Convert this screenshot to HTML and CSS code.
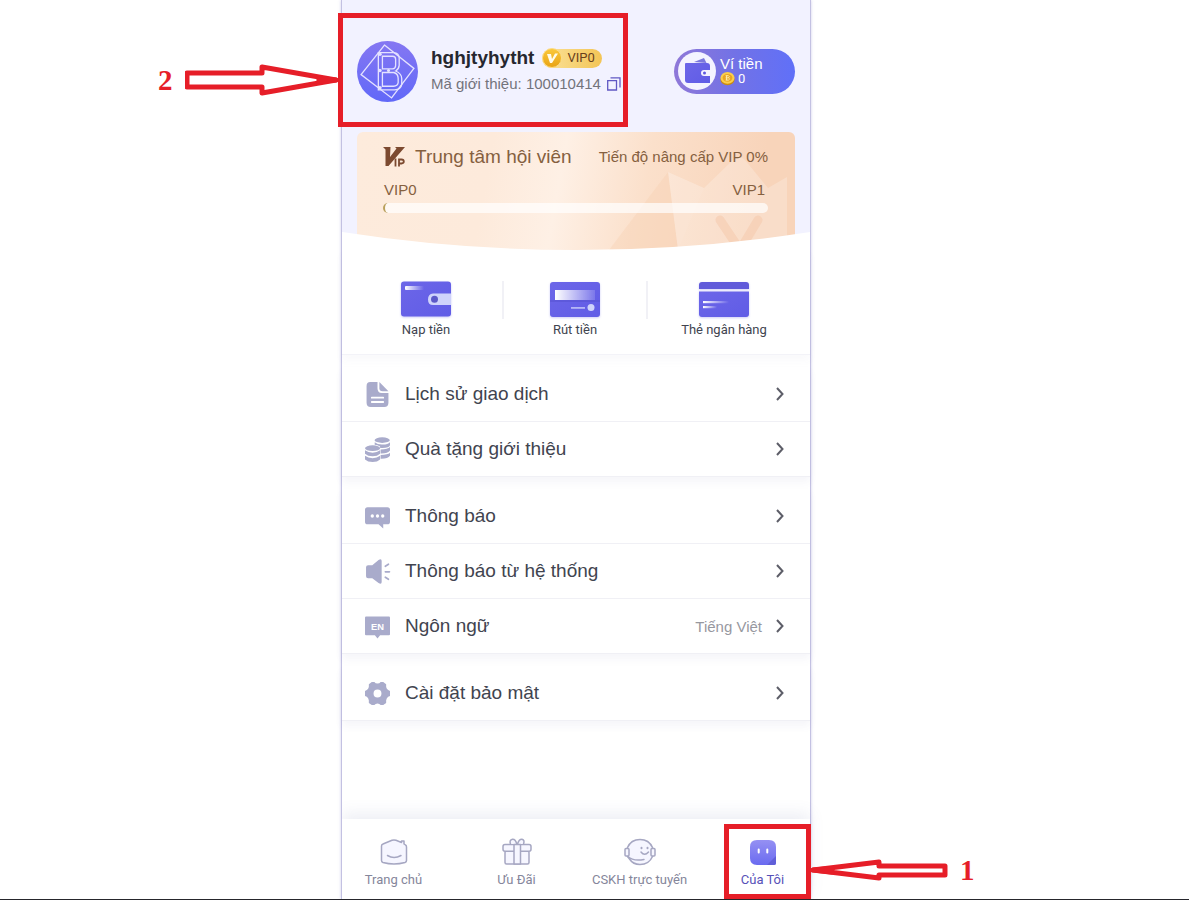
FILE: index.html
```html
<!DOCTYPE html>
<html lang="vi">

<head>
    <meta charset="UTF-8">
    <meta name="viewport" content="width=device-width, initial-scale=1.0">
    <title>Của Tôi</title>
    <link rel="stylesheet" href="styles.css">
</head>

<body>
    <!-- Shared gradients -->
    <svg class="defs" width="0" height="0" aria-hidden="true">
        <defs>
            <linearGradient id="violet" x1="0" y1="0" x2="0" y2="1">
                <stop offset="0" stop-color="#8577f2" />
                <stop offset="1" stop-color="#6168f8" />
            </linearGradient>
            <linearGradient id="face" x1="0" y1="0" x2="0" y2="1">
                <stop offset="0" stop-color="#9590f3" />
                <stop offset="1" stop-color="#6a6bf0" />
            </linearGradient>
            <linearGradient id="card" x1="0" y1="0" x2="1" y2="1">
                <stop offset="0" stop-color="#6c66e8" />
                <stop offset="1" stop-color="#605ce6" />
            </linearGradient>
            <linearGradient id="shine" x1="0" y1="0" x2="1" y2="0">
                <stop offset="0" stop-color="#fff" />
                <stop offset="1" stop-color="#fff" stop-opacity="0.15" />
            </linearGradient>
            <linearGradient id="fade" x1="0" y1="0" x2="1" y2="0">
                <stop offset="0" stop-color="#fff" />
                <stop offset="1" stop-color="#fff" stop-opacity="0" />
            </linearGradient>
            <linearGradient id="gold" x1="0" y1="0" x2="0" y2="1">
                <stop offset="0" stop-color="#fbc93c" />
                <stop offset="1" stop-color="#e8a213" />
            </linearGradient>
        </defs>
    </svg>

    <div class="page">
        <div class="phone">
            <header class="header">
                <div class="profile">
                    <svg class="avatar" viewBox="0 0 60 60" aria-hidden="true">
                        <circle cx="30" cy="30" r="30" fill="url(#violet)" />
                        <g fill="none" stroke="#e4e2ff" stroke-width="1.300">
                            <path d="M27 4 56 27 34 56 4 33Z" />
                            <path d="M21 11.500H36Q41.500 12 41.500 17V24Q41 28 38 29.500Q44 32 44 37V43Q43 48 37 48H21Z" />
                            <path d="M25 15H35Q38 15 38 18V24Q38 27 35 27.500H25Z" />
                            <path d="M25 31H36Q40.500 32 40.500 37V41Q40 44.500 36 44.500H25Z" />
                        </g>
                        <g fill="#e4e2ff">
                            <circle cx="22.500" cy="13" r="1.800" />
                            <circle cx="22.500" cy="29" r="1.800" />
                            <circle cx="22.500" cy="46" r="1.800" />
                            <circle cx="31" cy="29" r="1.500" />
                        </g>
                    </svg>
                    <div class="profile-info">
                        <div class="name-row">
                            <h1 class="name">hghjtyhytht</h1>
                            <span class="vip-badge">
                                <svg viewBox="0 0 20 20" aria-hidden="true">
                                    <circle cx="10" cy="10" r="9.500" fill="url(#gold)" stroke="#fbdc8a" />
                                    <path d="M5 6H9L10 11 13 5.500H16L10 15H8Z" fill="#fffbe8" />
                                </svg>
                                <span>VIP0</span>
                            </span>
                        </div>
                        <div class="code-row">
                            <span>Mã giới thiệu: 100010414</span>
                            <button class="copy" type="button" aria-label="Sao chép">
                                <svg viewBox="0 0 14 14" aria-hidden="true">
                                    <path d="M.7 3.700H9.500V13H.7ZM3.500.9H13V10.500" fill="none" stroke="#6058c4" stroke-width="1.300" />
                                </svg>
                            </button>
                        </div>
                    </div>
                    <a class="wallet" href="#">
                        <svg class="wallet-icon" viewBox="0 0 38 38" aria-hidden="true">
                            <circle cx="19" cy="19" r="19" fill="#f4f3ff" />
                            <path d="M16 10 26 6 28.500 11Z" fill="#7b78dc" />
                            <path d="M8 11H29Q32 11 32 14V31H10Q7 31 7 28V12Q7 11 8 11Z" fill="url(#card)" />
                            <path d="M32 18H26Q23 18 23 21T26 24H32Z" fill="#f4f3ff" />
                            <circle cx="26.500" cy="21" r="1.500" fill="#5d58e0" />
                        </svg>
                        <span class="wallet-text">
                            <span>Ví tiền</span>
                            <span class="coins">
                                <svg viewBox="0 0 16 15" aria-hidden="true">
                                    <ellipse cx="8" cy="8.500" rx="7.500" ry="6.300" fill="#c98a12" />
                                    <ellipse cx="8" cy="6.800" rx="7.500" ry="6.300" fill="#fbcf4b" />
                                    <ellipse cx="8" cy="6.800" rx="5.200" ry="4.200" fill="#e9a723" />
                                    <path d="M6 4.500H9Q11 5.500 9 6.800Q11.500 8 9 9.200H6M6 6.800H9M7 4.500V9.200" fill="none" stroke="#fff0b0" />
                                </svg>
                                0
                            </span>
                        </span>
                    </a>
                </div>

                <section class="vip-card">
                    <svg class="crown" viewBox="0 0 190 104" aria-hidden="true">
                        <path d="M4 104 63 26 73 104Z" fill="#f6ceb0" opacity=".35" />
                        <path d="M63 26 99 42 128 14Q134 8 140 14L163 42 182 31V104H73Z" fill="#fff" opacity=".22" />
                        <path d="M63 26 99 42 73 104Z" fill="#fff" opacity=".06" />
                        <path d="M115 74 135 104 153 74" fill="none" stroke="#f6cdb0" stroke-width="9" stroke-linecap="round" opacity=".65" />
                    </svg>
                    <div class="vip-top">
                        <h2 class="vip-title">
                            <svg viewBox="0 0 22 22" aria-hidden="true">
                                <path d="M0 1H7.500L7 11 13.500 2.500 12 1H22L5.500 20H2.500V3.500Z" fill="#7c4a30" />
                                <path d="M12.500 12.500V20.500M16 20.500V13.500H18.500Q20.800 13.700 20.800 15.500T18.500 17.500H16" fill="none" stroke="#7c4a30" stroke-width="1.800" />
                            </svg>
                            Trung tâm hội viên
                        </h2>
                        <span>Tiến độ nâng cấp VIP 0%</span>
                    </div>
                    <div class="vip-levels">
                        <span>VIP0</span>
                        <span>VIP1</span>
                    </div>
                    <progress class="vip-progress" value="0" max="100" aria-label="Tiến độ nâng cấp VIP">0%</progress>
                </section>

                <svg class="curve" viewBox="0 0 468 18" preserveAspectRatio="none" aria-hidden="true">
                    <path d="M0 0Q234 36 468 0V18H0Z" fill="#fff" />
                </svg>
            </header>

            <main>
                <div class="quick">
                    <a class="quick-item" href="#">
                        <svg viewBox="0 0 50 36" aria-hidden="true">
                            <rect width="50" height="35" y=".5" rx="3" fill="url(#card)" />
                            <rect x="4" y="5" width="19" height="4" rx="1" fill="url(#fade)" />
                            <path d="M50 12.500H32Q27 13 27 18.500T32 24H50Z" fill="#cfd3fb" />
                            <circle cx="33.500" cy="18.300" r="3.500" fill="#5c58c8" />
                        </svg>
                        Nạp tiền
                    </a>
                    <span class="divider"></span>
                    <a class="quick-item" href="#">
                        <svg viewBox="0 0 50 36" aria-hidden="true">
                            <rect width="50" height="35" y="1" rx="3" fill="url(#card)" />
                            <rect y="19.500" width="50" height="1" fill="#5550cf" />
                            <rect x="5" y="9" width="40" height="10" fill="url(#shine)" />
                            <rect x="21" y="26" width="14" height="1.800" fill="#c9ccfa" opacity=".8" />
                            <circle cx="41" cy="26.500" r="3.500" fill="#cfd3fb" />
                        </svg>
                        Rút tiền
                    </a>
                    <span class="divider"></span>
                    <a class="quick-item" href="#">
                        <svg viewBox="0 0 50 36" aria-hidden="true">
                            <path d="M3 1H47Q50 1 50 4V8H0V4Q0 1 3 1Z" fill="#615bda" />
                            <path d="M0 10.500H50V33Q50 36 47 36H3Q0 36 0 33Z" fill="url(#card)" />
                            <rect x="4" y="20" width="26" height="2.200" fill="url(#fade)" />
                            <rect x="4" y="25" width="14" height="2.200" fill="url(#fade)" />
                        </svg>
                        Thẻ ngân hàng
                    </a>
                </div>

                <nav class="menu">
                    <a class="menu-item" href="#">
                        <svg class="menu-icon" viewBox="0 0 24 24" aria-hidden="true">
                            <path d="M5 0H12V6Q12 10.500 16 10.500H22.500V20Q22.500 24 18.500 24H5.500Q1.500 24 1.500 20V4Q1.500 0 5 0Z" />
                            <path d="M13.800 0 22.500 8.800H17Q13.800 8.800 13.800 6Z" />
                            <path d="M6.500 15H17.500M6.500 19.200H17.500" stroke="#fff" stroke-width="1.700" stroke-linecap="round" />
                        </svg>
                        <span class="menu-label">Lịch sử giao dịch</span>
                        <svg class="chevron" viewBox="0 0 8 14" aria-hidden="true"><path d="M1 1 6.500 7 1 13" /></svg>
                    </a>
                    <a class="menu-item" href="#">
                        <svg class="menu-icon" viewBox="0 0 24 24" aria-hidden="true">
                            <ellipse cx="16.500" cy="3" rx="7.300" ry="2.700" />
                            <path d="M9.300 5Q12 7.500 17 7.300T24 5V8Q23 11 14.500 10.500V9Q12 7.700 9.300 7.500Z" />
                            <path d="M15 12Q22 12 24 9.700V13Q22 16 15 15.800ZM15 17.200Q22 17 24 15V18Q22 21 15 20.800Z" />
                            <ellipse cx="7.300" cy="10.700" rx="7.300" ry="2.700" />
                            <path d="M0 12.700Q3 15 7.300 15T14.500 12.700V16Q12 18.500 7.300 18.500T0 16ZM0 18Q3 20.300 7.300 20.300T14.500 18V21.500Q12 24 7.300 24T0 21.500Z" />
                        </svg>
                        <span class="menu-label">Quà tặng giới thiệu</span>
                        <svg class="chevron" viewBox="0 0 8 14" aria-hidden="true"><path d="M1 1 6.500 7 1 13" /></svg>
                    </a>
                </nav>

                <nav class="menu">
                    <a class="menu-item" href="#">
                        <svg class="menu-icon" viewBox="0 0 24 24" aria-hidden="true">
                            <path d="M2.500 3H21.500Q24 3 24 5.500V17Q24 19.500 21.500 19.500H17.500V23.500L13 19.500H2.500Q0 19.500 0 17V5.500Q0 3 2.500 3Z" />
                            <g fill="#fff">
                                <circle cx="7" cy="11.500" r="1.600" />
                                <circle cx="12" cy="11.500" r="1.600" />
                                <circle cx="17" cy="11.500" r="1.600" />
                            </g>
                        </svg>
                        <span class="menu-label">Thông báo</span>
                        <svg class="chevron" viewBox="0 0 8 14" aria-hidden="true"><path d="M1 1 6.500 7 1 13" /></svg>
                    </a>
                    <a class="menu-item" href="#">
                        <svg class="menu-icon" viewBox="0 0 24 24" aria-hidden="true">
                            <path d="M3 6H7L13 1Q16-.8 16 2V22Q16 24.800 13 23L7 18.500H3Q1 18.500 1 16.500V8Q1 6 3 6Z" />
                            <path d="M19.500 7 22.500 5M19.500 12.300H23.500M19.500 17.500 22.500 19.500" stroke="#a9abcb" stroke-width="1.600" stroke-linecap="round" />
                        </svg>
                        <span class="menu-label">Thông báo từ hệ thống</span>
                        <svg class="chevron" viewBox="0 0 8 14" aria-hidden="true"><path d="M1 1 6.500 7 1 13" /></svg>
                    </a>
                    <a class="menu-item" href="#">
                        <svg class="menu-icon" viewBox="0 0 24 24" aria-hidden="true">
                            <path d="M1 2.500H23Q24 2.500 24 3.500V19.500Q24 20.500 23 20.500H14.500L12 23.500 9.500 20.500H1Q0 20.500 0 19.500V3.500Q0 2.500 1 2.500Z" />
                            <text x="12" y="15" text-anchor="middle" class="lang-text">EN</text>
                        </svg>
                        <span class="menu-label">Ngôn ngữ</span>
                        <span class="menu-value">Tiếng Việt</span>
                        <svg class="chevron" viewBox="0 0 8 14" aria-hidden="true"><path d="M1 1 6.500 7 1 13" /></svg>
                    </a>
                </nav>

                <nav class="menu">
                    <a class="menu-item" href="#">
                        <svg class="menu-icon" viewBox="0 0 24 24" aria-hidden="true">
                            <path fill-rule="evenodd" d="M6.500 1H9Q10 2.500 12 2.500T15 1H17.500L20.300 3Q20 6 21 7.500T24 9.500V14.500Q22 15 21 16.500T20.300 21L17.500 23H15Q14 21.500 12 21.500T9 23H6.500L3.700 21Q4 18 3 16.500T0 14.500V9.500Q2 9 3 7.500T3.700 3ZM12 8.200A3.800 3.800 0 1 0 12 15.800 3.800 3.800 0 1 0 12 8.200Z" />
                        </svg>
                        <span class="menu-label">Cài đặt bảo mật</span>
                        <svg class="chevron" viewBox="0 0 8 14" aria-hidden="true"><path d="M1 1 6.500 7 1 13" /></svg>
                    </a>
                </nav>
            </main>

            <nav class="tabs">
                <a class="tab" href="#">
                    <svg viewBox="0 0 32 28" aria-hidden="true">
                        <path d="M3.500 8Q3.500 6.500 5 6L14 2.300Q16 1.500 18 2.300L23.500 4.500V3H26V6L27.500 7Q28.500 7.500 28.500 9V22.500Q28.500 24 27 24.500Q16 27.500 5 24.500Q3.500 24 3.500 22.500Z" />
                        <path d="M9.500 17.500Q16 21.500 23 17.500" />
                    </svg>
                    Trang chủ
                </a>
                <a class="tab" href="#">
                    <svg viewBox="0 0 32 28" aria-hidden="true">
                        <rect x="4" y="13" width="24" height="13" rx="1.500" />
                        <rect x="2" y="6.500" width="28" height="6.700" rx="2" />
                        <path d="M13 6.500H19.500V26H13ZM15.800 6Q14.500 1 11.500 1.200Q8 2 9.500 6M16.500 6Q18 1 21 1.200Q24 2 22.500 6" />
                    </svg>
                    Ưu Đãi
                </a>
                <a class="tab" href="#">
                    <svg viewBox="0 0 32 28" aria-hidden="true">
                        <path d="M3.500 9.500Q7 1.500 16 1.500T28.500 9.500V18.500Q25 26.500 16 26.500Q9 26.500 5.500 21L3.500 18.500Z" />
                        <rect x="1" y="10.500" width="4" height="7.500" rx="1" />
                        <rect x="27" y="10.500" width="4" height="7.500" rx="1" />
                        <path d="M4 18.500Q9 23.500 20 21.500" />
                        <path d="M17 14Q20.500 18.500 24.500 14" fill="none" />
                        <path d="M17.500 9.800V10.200M23.500 9.800V10.200" stroke-width="2" />
                    </svg>
                    CSKH trực tuyến
                </a>
                <a class="tab tab-active" href="#">
                    <svg viewBox="0 0 32 28" aria-hidden="true">
                        <path d="M10 2H22Q29 2 29 9V25Q29 27 27 27H10Q3 27 3 20V9Q3 2 10 2Z" fill="url(#face)" stroke="none" />
                        <path d="M29 18V25Q29 27 27 27H20Z" fill="#605fd8" stroke="none" />
                        <path d="M11.700 11.500V14.500M20.300 11.500V14.500" stroke="#fff" stroke-width="2" />
                    </svg>
                    Của Tôi
                </a>
                <div class="mark mark-tab"></div>
                <div class="note note-tab">
                    <svg width="138" height="34" viewBox="0 0 138 34" aria-hidden="true">
                        <path d="M3 17 69 9V13H135V22H69V25Z" />
                        <path d="M3 17 22 15.500V19Z" />
                    </svg>
                    <span>1</span>
                </div>
            </nav>

            <div class="mark mark-profile"></div>
            <div class="note note-profile">
                <span>2</span>
                <svg width="154" height="34" viewBox="0 0 154 34" aria-hidden="true">
                    <path d="M2 10H77V4L151 17 77 30V24H2Z" />
                    <path d="M151 17 134 15.500V18.500Z" />
                </svg>
            </div>
        </div>
    </div>
</body>

</html>
```
FILE: styles.css
```css
:root {
    --primary-color: #6070f8;
    --header-color: #f2f2ff;
    --icon-color: #a9abcb;
    --text-color: #41444f;
    --brown: #85603f;
    --mark-color: #e61e28;
}

* {
    box-sizing: border-box;
}

body {
    margin: 0;
    font-family: "Liberation Sans", Arial, sans-serif;
    font-size: 15px;
    color: var(--text-color);
    background-color: #fff;
}

a {
    color: inherit;
    text-decoration: none;
}

svg {
    display: block;
    flex-shrink: 0;
}

h1,
h2 {
    margin: 0;
    font-size: 19px;
}

.defs {
    position: absolute;
}

.page {
    display: grid;
    grid-template-columns: 341fr minmax(auto, 470px) 378fr;
    min-height: 100vh;
    overflow: hidden;
    border-bottom: 1px solid #26262c;
}

.phone {
    grid-column: 2;
    position: relative;
    display: flex;
    flex-direction: column;
    border: 1px solid #c3c1e2;
    border-width: 0 1px;
    box-shadow: 0 0 3px rgba(120, 118, 200, 0.35);
}

/* Header */
.header {
    padding: 40px 15px 0;
    background-color: var(--header-color);
}

.profile {
    display: flex;
    align-items: center;
    height: 62px;
}

.avatar {
    width: 61px;
    height: 61px;
}

.profile-info {
    flex: 1;
    margin-left: 13px;
}

.name-row,
.code-row {
    display: flex;
    align-items: center;
    gap: 8px;
    line-height: 26px;
}

.name {
    color: #26272f;
}

.vip-badge {
    display: flex;
    align-items: center;
    gap: 5px;
    height: 19px;
    padding-right: 7px;
    border-radius: 10px;
    background: linear-gradient(90deg, #fbe39c, #f3c556);
    color: #68401c;
    font-family: Roboto, sans-serif;
    font-size: 13px;
}

.vip-badge svg {
    width: 20px;
    height: 20px;
}

.code-row {
    gap: 6px;
    color: #73747c;
}

.copy {
    padding: 0;
    border: 0;
    background: none;
}

.copy svg {
    width: 14px;
    height: 14px;
}

.wallet {
    display: flex;
    align-items: center;
    gap: 4px;
    width: 121px;
    height: 45px;
    padding-left: 4px;
    border-radius: 23px;
    background: linear-gradient(90deg, #8f78d8, #7272e6 50%, var(--primary-color));
    color: #fff;
}

.wallet-icon {
    width: 38px;
    height: 38px;
}

.wallet-text {
    line-height: 15px;
}

.coins {
    display: flex;
    align-items: center;
    gap: 3px;
    font-family: Roboto, sans-serif;
    font-size: 13px;
}

.coins svg {
    width: 15px;
    height: 15px;
}

/* VIP card */
.vip-card {
    position: relative;
    height: 118px;
    margin-top: 30px;
    padding: 12px 27px 0 26px;
    border-radius: 6px 6px 0 0;
    overflow: hidden;
    background: linear-gradient(100deg, #fdebdc 0%, #fdeadb 30%, #fef0e5 46%, #fbe0cb 65%, #f8d4ba 90%);
    color: var(--brown);
}

.crown {
    position: absolute;
    right: 0;
    bottom: 0;
    width: 190px;
    height: 104px;
}

.vip-top,
.vip-levels {
    position: relative;
    display: flex;
    justify-content: space-between;
    align-items: center;
    line-height: 26px;
}

.vip-title {
    display: flex;
    align-items: center;
    gap: 10px;
    font-weight: normal;
}

.vip-title svg {
    width: 22px;
    height: 22px;
}

.vip-levels {
    padding: 7px 3px 0 1px;
}

.vip-progress {
    position: relative;
    display: block;
    width: 100%;
    height: 10px;
    appearance: none;
    border: 0;
    border-left: 2px solid #b9a05c;
    border-radius: 5px;
    overflow: hidden;
    background: rgba(255, 255, 255, 0.7);
}

.vip-progress::-webkit-progress-bar {
    background: transparent;
}

.curve {
    position: relative;
    width: calc(100% + 30px);
    height: 18px;
    margin: -18px -15px 0;
}

/* Quick actions */
.quick {
    display: grid;
    grid-template-columns: 1fr 2px 142px 2px 1fr;
    height: 105px;
    padding: 31px 10px 0 8px;
    border-bottom: 1px solid #f3f3f8;
    box-shadow: 0 5px 8px rgba(90, 90, 150, 0.04);
}

.quick-item {
    display: flex;
    flex-direction: column;
    align-items: center;
    gap: 4px;
    font-family: Roboto, sans-serif;
    font-size: 13px;
    line-height: 17px;
}

.quick-item svg {
    width: 50px;
    height: 36px;
    filter: drop-shadow(0 1px 1px rgba(93, 88, 224, 0.3));
}

.divider {
    height: 38px;
    background-color: #f1f1f6;
}

/* Menu groups */
.menu {
    margin-top: 12px;
    background-color: #fff;
    box-shadow: 0 5px 8px rgba(90, 90, 150, 0.06);
}

.menu-item {
    display: flex;
    align-items: center;
    height: 55px;
    padding: 0 26px 0 23px;
    border-bottom: 1px solid #f0f0f5;
}

.menu-icon {
    width: 25px;
    height: 25px;
    fill: var(--icon-color);
    overflow: visible;
}

.lang-text {
    fill: #fff;
    font-size: 9px;
    font-weight: bold;
}

.menu-label {
    flex: 1;
    margin-left: 15px;
    font-size: 19px;
}

.menu-value {
    margin-right: 14px;
    color: #97989f;
}

.chevron {
    width: 8px;
    height: 14px;
    fill: none;
    stroke: #5d5e68;
    stroke-width: 2;
}

/* Bottom tabs */
.tabs {
    position: relative;
    display: flex;
    justify-content: space-between;
    height: 80px;
    margin-top: auto;
    padding: 19px 0 0 4px;
    background-color: #fff;
    box-shadow: 0 -6px 14px rgba(90, 95, 160, 0.1);
    clip-path: inset(-20px -400px 0 0);
}

.tab {
    display: flex;
    flex-direction: column;
    align-items: center;
    gap: 4px;
    width: 95px;
    color: #85869b;
    font-family: Roboto, sans-serif;
    font-size: 13px;
    line-height: 19px;
    white-space: nowrap;
}

.tab svg {
    width: 32px;
    height: 28px;
    fill: #f6f6ff;
    stroke: #a6a7c2;
    stroke-width: 1.5;
    stroke-linecap: round;
    stroke-linejoin: round;
}

.tab-active {
    color: #5751b8;
}

/* Red callouts drawn over the screen */
.mark {
    position: absolute;
    border: 5px solid var(--mark-color);
    pointer-events: none;
}

.mark-profile {
    top: 13px;
    left: -4px;
    width: 290px;
    height: 114px;
}

.mark-tab {
    top: 5px;
    right: -1px;
    width: 87px;
    height: 75px;
}

.note {
    position: absolute;
    display: flex;
    align-items: center;
    gap: 12px;
    color: var(--mark-color);
    font-family: "Liberation Serif", serif;
    font-size: 29px;
    font-weight: bold;
    line-height: 34px;
}

.note svg {
    fill: none;
    stroke: var(--mark-color);
    stroke-width: 5;
    stroke-linejoin: round;
}

.note-profile {
    top: 63px;
    left: -184px;
}

.note-tab {
    top: 34px;
    left: 100%;
}
```
